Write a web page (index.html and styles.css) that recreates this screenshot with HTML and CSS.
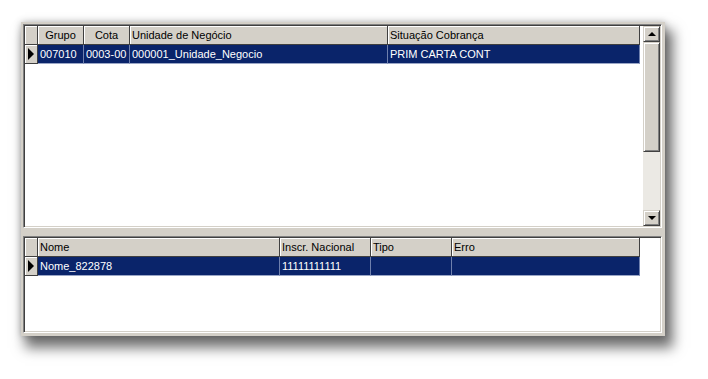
FILE: index.html
```html
<!DOCTYPE html>
<html lang="pt">
<head>
    <meta charset="UTF-8">
    <title>Cobrança</title>
    <link rel="stylesheet" href="styles.css">
</head>
<body>

<div class="window">
    <div class="grid grid-top">
        <div class="cols">
            <div class="row head">
                <div class="ind"></div>
                <div class="cell c-grupo center">Grupo</div>
                <div class="cell c-cota center">Cota</div>
                <div class="cell c-unid">Unidade de Negócio</div>
                <div class="cell c-sit">Situação Cobrança</div>
            </div>
            <div class="row sel">
                <div class="ind"><span class="arrow"></span></div>
                <div class="cell c-grupo">007010</div>
                <div class="cell c-cota">0003-00</div>
                <div class="cell c-unid">000001_Unidade_Negocio</div>
                <div class="cell c-sit">PRIM CARTA CONT</div>
            </div>
        </div>
        <div class="scrollbar">
            <div class="sbtn"><span class="up"></span></div>
            <div class="track">
                <div class="thumb"></div>
            </div>
            <div class="sbtn"><span class="down"></span></div>
        </div>
    </div>

    <div class="grid grid-bottom">
        <div class="cols">
            <div class="row head">
                <div class="ind"></div>
                <div class="cell c-nome">Nome</div>
                <div class="cell c-inscr">Inscr. Nacional</div>
                <div class="cell c-tipo">Tipo</div>
                <div class="cell c-erro">Erro</div>
            </div>
            <div class="row sel">
                <div class="ind"><span class="arrow"></span></div>
                <div class="cell c-nome">Nome_822878</div>
                <div class="cell c-inscr">11111111111</div>
                <div class="cell c-tipo"></div>
                <div class="cell c-erro"></div>
            </div>
        </div>
    </div>
</div>

</body>
</html>
```

FILE: styles.css
```css
html, body {
    height: 100%;
}
body {
    margin: 0;
    padding: 22px 0 0 21px;
    box-sizing: border-box;
    background: #fff;
    font-family: "Liberation Sans", Arial, sans-serif;
    font-size: 11px;
}
.window {
    width: 644px;
    height: 314px;
    box-sizing: border-box;
    background: #d4d0c8;
    padding: 2px 3px 3px 2px;
    display: flex;
    flex-direction: column;
    gap: 8px;
    box-shadow: 0 0 7px rgba(0,0,0,0.25), 6px 10px 12px 2px rgba(0,0,0,0.55);
}
.grid {
    background: #fff;
    border: 1px solid;
    border-color: #808080 #fff #fff #808080;
    box-shadow: inset 1px 1px 0 #404040, inset -1px -1px 0 #d4d0c8;
    padding: 1px;
    display: flex;
}
.grid-top {
    height: 204px;
    box-sizing: border-box;
}
.grid-bottom {
    flex: 1;
}
.cols {
    flex: 1;
}
.row {
    display: flex;
    height: 19px;
}
.ind {
    width: 12px;
    flex: none;
    background: #d4d0c8;
    border-right: 1px solid #404040;
    border-bottom: 1px solid #404040;
    box-shadow: inset 1px 1px 0 #fff;
    display: flex;
    align-items: center;
    justify-content: center;
}
.arrow {
    width: 0;
    height: 0;
    border-left: 6px solid #000;
    border-top: 6px solid transparent;
    border-bottom: 6px solid transparent;
}
.cell {
    flex: none;
    box-sizing: border-box;
    padding: 0 2px;
    line-height: 19px;
    white-space: nowrap;
    overflow: hidden;
}
.head .cell {
    background: #d4d0c8;
    color: #000;
    border-right: 1px solid #404040;
    border-bottom: 1px solid #404040;
    box-shadow: inset 1px 1px 0 #fff;
}
.sel .cell {
    background: #0a246a;
    color: #fff;
    border-right: 1px solid #6f80ad;
    border-bottom: 1px solid #9aa6c6;
}
.center {
    text-align: center;
}
.c-grupo { width: 46px; }
.c-cota { width: 46px; }
.c-unid { width: 258px; }
.c-sit { width: 252px; }
.c-nome { width: 242px; }
.c-inscr { width: 91px; }
.c-tipo { width: 81px; }
.c-erro { width: 188px; }
.scrollbar {
    width: 17px;
    flex: none;
    display: flex;
    flex-direction: column;
    margin-left: 1px;
}
.sbtn {
    height: 16px;
    flex: none;
    box-sizing: border-box;
    background: #d4d0c8;
    border: 1px solid;
    border-color: #d4d0c8 #404040 #404040 #d4d0c8;
    box-shadow: inset 1px 1px 0 #fff, inset -1px -1px 0 #808080;
    display: flex;
    align-items: center;
    justify-content: center;
}
.up, .down {
    width: 0;
    height: 0;
    border-left: 4px solid transparent;
    border-right: 4px solid transparent;
}
.up {
    border-bottom: 4px solid #000;
}
.down {
    border-top: 4px solid #000;
}
.track {
    flex: 1;
    background: #ebe9e4;
}
.thumb {
    height: 110px;
    box-sizing: border-box;
    background: #d4d0c8;
    border: 1px solid;
    border-color: #d4d0c8 #404040 #404040 #d4d0c8;
    box-shadow: inset 1px 1px 0 #fff, inset -1px -1px 0 #808080;
}
```
